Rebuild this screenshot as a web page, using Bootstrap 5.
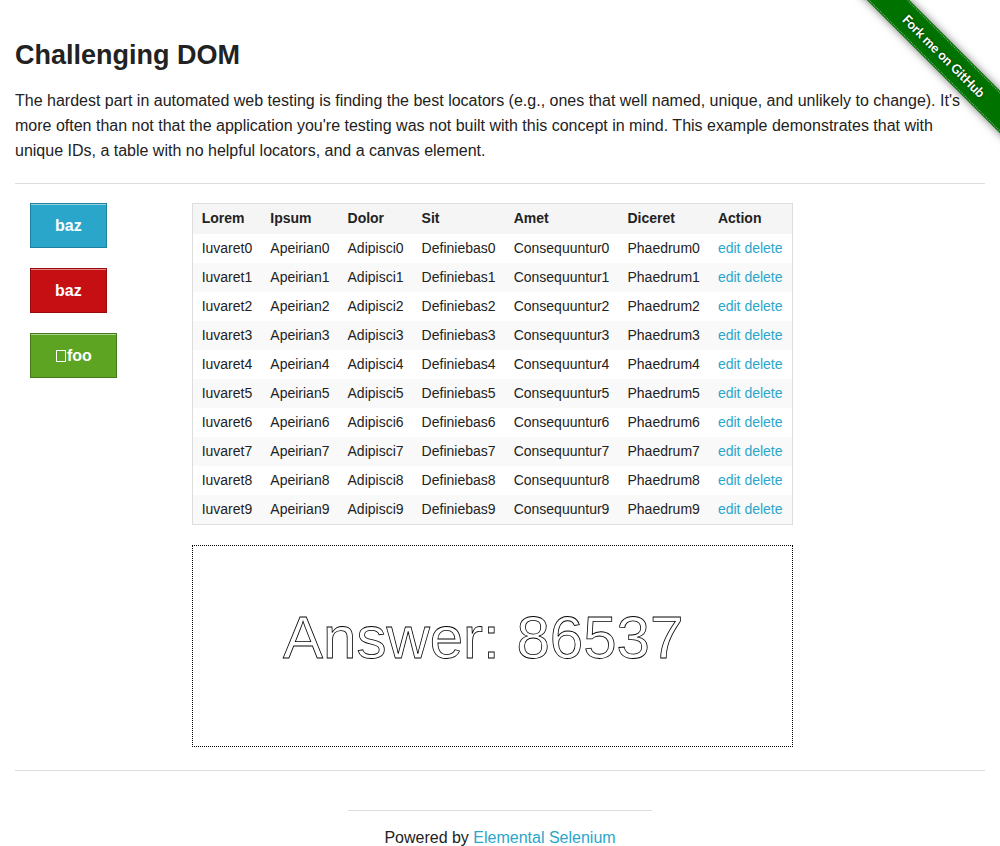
<!DOCTYPE html>
<html lang="en">
<head>
<meta charset="utf-8">
<meta name="viewport" content="width=device-width, initial-scale=1">
<title>Challenging DOM</title>
<link href="https://cdn.jsdelivr.net/npm/bootstrap@5.3.0/dist/css/bootstrap.min.css" rel="stylesheet">
<style>
  body { font-family: "Liberation Sans", Arial, sans-serif; font-size: 16px; line-height: 25px; color: #222; background: #fff; }
  a { color: #2ba6cb; text-decoration: none; }
  a:hover { color: #258faf; }
  hr { border-color: #ddd; opacity: 1; margin: 0; }
  .page { padding: 36px 15px 0; }
  .page-title { font-size: 27px; line-height: 38px; font-weight: 700; margin-bottom: 14px; }
  .intro { margin-bottom: 20px; }
  .content-row { padding: 19px 0 23px; }
  .wide-gutter { --bs-gutter-x: 30px; }
  .button-stack { gap: 20px; }
  .challenge-btn { --bs-btn-color: #fff; --bs-btn-hover-color: #fff; height: 45px; padding: 0 24px; border-radius: 0; font-weight: 700; line-height: 20px; box-shadow: inset 0 1px 0 rgba(255, 255, 255, .5); }
  .btn-blue { --bs-btn-bg: #2ba6cb; --bs-btn-border-color: #1e81a0; --bs-btn-hover-bg: #258faf; }
  .btn-red { --bs-btn-bg: #c60f13; --bs-btn-border-color: #970b0e; --bs-btn-hover-bg: #a20c10; }
  .btn-green { --bs-btn-bg: #5da423; --bs-btn-border-color: #457a1a; --bs-btn-hover-bg: #4f8a1e; }
  .glyph-box { width: 10px; height: 12px; border: 1px solid #fff; margin: 0 1px; }
  .data-table { width: 601px; font-size: 14px; line-height: 18px; color: #222; border: 1px solid #ddd; margin-bottom: 20px; white-space: nowrap; }
  .data-table > thead > tr > th { background: #f5f5f5; color: #222; padding: 5px 9px 7px; border: 0; }
  .data-table > tbody > tr > td { color: #222; padding: 5px 9px 6px; border: 0; background: transparent; }
  .data-table > tbody > tr:nth-child(even) { background: #f9f9f9; }
  .answer-box { display: block; width: 601px; max-width: 100%; border: 1px dotted #000; }
  .answer-box text { font: 60px "Liberation Sans", Arial, sans-serif; fill: none; stroke: #000; stroke-width: .8px; }
  .page-footer { line-height: 18px; padding-top: 39px; }
  .page-footer hr { margin-bottom: 18px; }
  .ribbon-corner { position: absolute; top: 0; right: 0; width: 149px; height: 149px; overflow: hidden; pointer-events: none; }
  .ribbon { position: absolute; top: 41px; right: -54px; width: 220px; height: 30px; background: #007200; transform: rotate(45deg); box-shadow: 0 0 8px rgba(0, 0, 0, .55); pointer-events: auto; }
  .ribbon::before { content: ""; position: absolute; inset: 1px 0; border-top: 1px dotted #7fb87f; border-bottom: 1px dotted #7fb87f; }
  .ribbon, .ribbon:hover { color: #fff; font: 700 13px/30px Lato, sans-serif; text-align: center; text-shadow: 0 0 3px rgba(0, 0, 0, .6); }
</style>
</head>
<body>
<div class="ribbon-corner"><a class="ribbon" href="#">Fork me on GitHub</a></div>
<main class="page">
  <h3 class="page-title">Challenging DOM</h3>
  <p class="intro">The hardest part in automated web testing is finding the best locators (e.g., ones that well named, unique, and unlikely to change). It's more often than not that the application you're testing was not built with this concept in mind. This example demonstrates that with unique IDs, a table with no helpful locators, and a canvas element.</p>
  <hr>
  <div class="row wide-gutter content-row mx-0">
    <div class="col-2 d-flex flex-column align-items-start button-stack">
      <button type="button" class="btn challenge-btn btn-blue">baz</button>
      <button type="button" class="btn challenge-btn btn-red">baz</button>
      <button type="button" class="btn challenge-btn btn-green d-flex align-items-center"><span class="glyph-box"></span>foo</button>
    </div>
    <div class="col-10">
      <table class="table data-table">
        <thead><tr><th>Lorem</th><th>Ipsum</th><th>Dolor</th><th>Sit</th><th>Amet</th><th>Diceret</th><th>Action</th></tr></thead>
        <tbody>
          <tr><td>Iuvaret0</td><td>Apeirian0</td><td>Adipisci0</td><td>Definiebas0</td><td>Consequuntur0</td><td>Phaedrum0</td><td><a href="#edit">edit</a> <a href="#delete">delete</a></td></tr>
          <tr><td>Iuvaret1</td><td>Apeirian1</td><td>Adipisci1</td><td>Definiebas1</td><td>Consequuntur1</td><td>Phaedrum1</td><td><a href="#edit">edit</a> <a href="#delete">delete</a></td></tr>
          <tr><td>Iuvaret2</td><td>Apeirian2</td><td>Adipisci2</td><td>Definiebas2</td><td>Consequuntur2</td><td>Phaedrum2</td><td><a href="#edit">edit</a> <a href="#delete">delete</a></td></tr>
          <tr><td>Iuvaret3</td><td>Apeirian3</td><td>Adipisci3</td><td>Definiebas3</td><td>Consequuntur3</td><td>Phaedrum3</td><td><a href="#edit">edit</a> <a href="#delete">delete</a></td></tr>
          <tr><td>Iuvaret4</td><td>Apeirian4</td><td>Adipisci4</td><td>Definiebas4</td><td>Consequuntur4</td><td>Phaedrum4</td><td><a href="#edit">edit</a> <a href="#delete">delete</a></td></tr>
          <tr><td>Iuvaret5</td><td>Apeirian5</td><td>Adipisci5</td><td>Definiebas5</td><td>Consequuntur5</td><td>Phaedrum5</td><td><a href="#edit">edit</a> <a href="#delete">delete</a></td></tr>
          <tr><td>Iuvaret6</td><td>Apeirian6</td><td>Adipisci6</td><td>Definiebas6</td><td>Consequuntur6</td><td>Phaedrum6</td><td><a href="#edit">edit</a> <a href="#delete">delete</a></td></tr>
          <tr><td>Iuvaret7</td><td>Apeirian7</td><td>Adipisci7</td><td>Definiebas7</td><td>Consequuntur7</td><td>Phaedrum7</td><td><a href="#edit">edit</a> <a href="#delete">delete</a></td></tr>
          <tr><td>Iuvaret8</td><td>Apeirian8</td><td>Adipisci8</td><td>Definiebas8</td><td>Consequuntur8</td><td>Phaedrum8</td><td><a href="#edit">edit</a> <a href="#delete">delete</a></td></tr>
          <tr><td>Iuvaret9</td><td>Apeirian9</td><td>Adipisci9</td><td>Definiebas9</td><td>Consequuntur9</td><td>Phaedrum9</td><td><a href="#edit">edit</a> <a href="#delete">delete</a></td></tr>
        </tbody>
      </table>
      <svg class="answer-box" viewBox="0 0 599 200"><text x="90" y="112">Answer: 86537</text></svg>
    </div>
  </div>
  <hr>
</main>
<footer class="page-footer row wide-gutter mx-0 justify-content-center">
  <div class="col-4 text-center">
    <hr>
    Powered by <a href="#elemental">Elemental Selenium</a>
  </div>
</footer>
<script src="https://cdn.jsdelivr.net/npm/bootstrap@5.3.0/dist/js/bootstrap.bundle.min.js"></script>
</body>
</html>
